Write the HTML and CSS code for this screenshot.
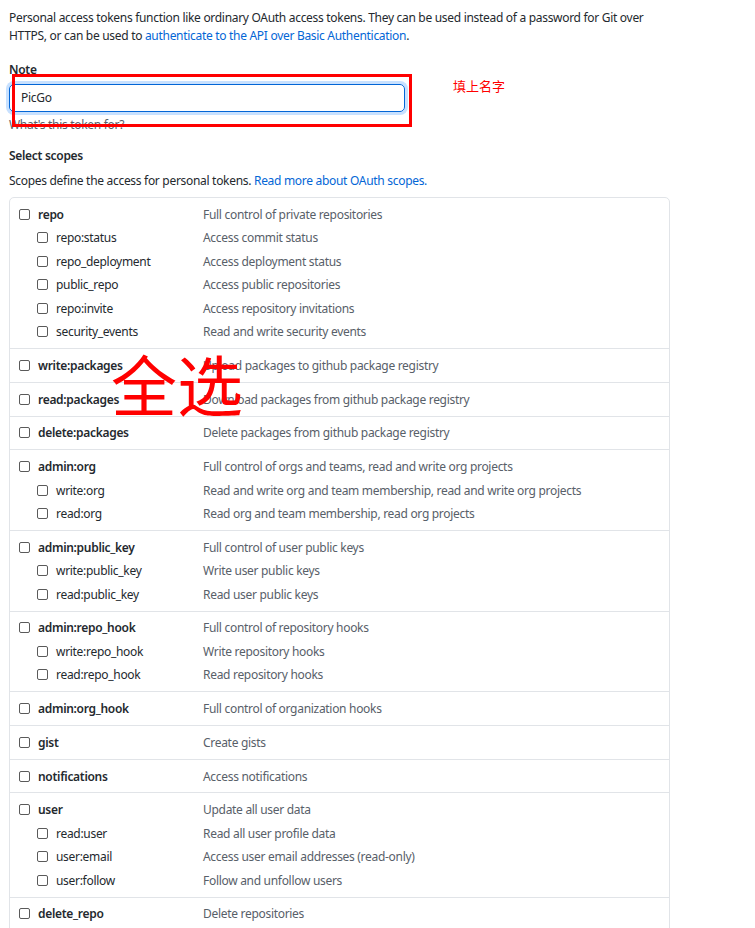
FILE: index.html
```html
<!DOCTYPE html>
<html lang="en">
<head>
<meta charset="utf-8">
<title>New personal access token</title>
<link rel="stylesheet" href="styles.css">
</head>
<body>
<div class="page">
  <p class="intro">Personal access tokens function like ordinary OAuth access tokens. They can be used instead of a password for Git over<br>HTTPS, or can be used to <a href="#">authenticate to the API over Basic Authentication</a>.</p>

  <div class="field">
    <label class="field-label">Note</label>
    <div class="input">PicGo</div>
    <p class="hint">What's this token for?</p>
    <div class="mark-rect"></div>
    <span class="mark-note">填上名字</span>
  </div>

  <h3 class="section-title">Select scopes</h3>
  <p class="section-desc">Scopes define the access for personal tokens. <a href="#">Read more about OAuth scopes.</a></p>

  <div class="scopes">
    <span class="mark-all">全选</span>

    <div class="group">
      <div class="row top"><span class="name"><i class="cb"></i>repo</span><span class="desc">Full control of private repositories</span></div>
      <div class="row sub"><span class="name"><i class="cb"></i>repo:status</span><span class="desc">Access commit status</span></div>
      <div class="row sub"><span class="name"><i class="cb"></i>repo_deployment</span><span class="desc">Access deployment status</span></div>
      <div class="row sub"><span class="name"><i class="cb"></i>public_repo</span><span class="desc">Access public repositories</span></div>
      <div class="row sub"><span class="name"><i class="cb"></i>repo:invite</span><span class="desc">Access repository invitations</span></div>
      <div class="row sub"><span class="name"><i class="cb"></i>security_events</span><span class="desc">Read and write security events</span></div>
    </div>

    <div class="group">
      <div class="row top"><span class="name"><i class="cb"></i>write:packages</span><span class="desc">Upload packages to github package registry</span></div>
    </div>

    <div class="group">
      <div class="row top"><span class="name"><i class="cb"></i>read:packages</span><span class="desc">Download packages from github package registry</span></div>
    </div>

    <div class="group">
      <div class="row top"><span class="name"><i class="cb"></i>delete:packages</span><span class="desc">Delete packages from github package registry</span></div>
    </div>

    <div class="group">
      <div class="row top"><span class="name"><i class="cb"></i>admin:org</span><span class="desc">Full control of orgs and teams, read and write org projects</span></div>
      <div class="row sub"><span class="name"><i class="cb"></i>write:org</span><span class="desc">Read and write org and team membership, read and write org projects</span></div>
      <div class="row sub"><span class="name"><i class="cb"></i>read:org</span><span class="desc">Read org and team membership, read org projects</span></div>
    </div>

    <div class="group">
      <div class="row top"><span class="name"><i class="cb"></i>admin:public_key</span><span class="desc">Full control of user public keys</span></div>
      <div class="row sub"><span class="name"><i class="cb"></i>write:public_key</span><span class="desc">Write user public keys</span></div>
      <div class="row sub"><span class="name"><i class="cb"></i>read:public_key</span><span class="desc">Read user public keys</span></div>
    </div>

    <div class="group">
      <div class="row top"><span class="name"><i class="cb"></i>admin:repo_hook</span><span class="desc">Full control of repository hooks</span></div>
      <div class="row sub"><span class="name"><i class="cb"></i>write:repo_hook</span><span class="desc">Write repository hooks</span></div>
      <div class="row sub"><span class="name"><i class="cb"></i>read:repo_hook</span><span class="desc">Read repository hooks</span></div>
    </div>

    <div class="group">
      <div class="row top"><span class="name"><i class="cb"></i>admin:org_hook</span><span class="desc">Full control of organization hooks</span></div>
    </div>

    <div class="group">
      <div class="row top"><span class="name"><i class="cb"></i>gist</span><span class="desc">Create gists</span></div>
    </div>

    <div class="group">
      <div class="row top"><span class="name"><i class="cb"></i>notifications</span><span class="desc">Access notifications</span></div>
    </div>

    <div class="group">
      <div class="row top"><span class="name"><i class="cb"></i>user</span><span class="desc">Update all user data</span></div>
      <div class="row sub"><span class="name"><i class="cb"></i>read:user</span><span class="desc">Read all user profile data</span></div>
      <div class="row sub"><span class="name"><i class="cb"></i>user:email</span><span class="desc">Access user email addresses (read-only)</span></div>
      <div class="row sub"><span class="name"><i class="cb"></i>user:follow</span><span class="desc">Follow and unfollow users</span></div>
    </div>

    <div class="group">
      <div class="row top"><span class="name"><i class="cb"></i>delete_repo</span><span class="desc">Delete repositories</span></div>
    </div>

    <div class="group group-more"></div>
  </div>
</div>
</body>
</html>
```
FILE: styles.css
```css
html, body {
  margin: 0;
  padding: 0;
  background: #ffffff;
}

body {
  font-family: "Noto Sans", "Open Sans", "Noto Sans CJK SC", sans-serif;
  font-size: 12px;
  letter-spacing: -0.3px;
  color: #24292e;
  overflow: hidden;
  height: 928px;
}

a {
  color: #0366d6;
  text-decoration: none;
}

.page {
  width: 661px;
  padding: 9px 0 0 9px;
}

.intro {
  margin: 0;
  line-height: 18px;
  white-space: nowrap;
}

.field {
  position: relative;
  margin-top: 16px;
}

.field-label {
  display: block;
  font-weight: 600;
  line-height: 18px;
}

.input {
  box-sizing: border-box;
  width: 396px;
  height: 28px;
  margin-top: 5px;
  padding: 0 11px;
  line-height: 26px;
  border: 1px solid #0366d6;
  border-radius: 5px;
  box-shadow: 0 0 0 3px #c8e1ff;
  color: #24292e;
}

.hint {
  margin: 4px 0 0;
  line-height: 18px;
  color: #586069;
}

.mark-rect {
  position: absolute;
  left: 3px;
  top: 13px;
  width: 394px;
  height: 47px;
  border: 3px solid #ff0000;
}

.mark-note {
  position: absolute;
  left: 444px;
  top: 16px;
  font-family: "Noto Sans CJK SC", sans-serif;
  font-size: 13px;
  line-height: 18px;
  letter-spacing: 0;
  color: #ff0000;
}

.section-title {
  margin: 13px 0 0;
  font-size: 12px;
  font-weight: 600;
  line-height: 18px;
}

.section-desc {
  margin: 7px 0 0;
  line-height: 18px;
}

.scopes {
  position: relative;
  margin-top: 7px;
  border: 1px solid #e1e4e8;
  border-radius: 5px;
}

.group {
  padding: 4.6px 0;
  border-top: 1px solid #e1e4e8;
}

.group:first-of-type {
  border-top: 0;
}

.group-more {
  height: 40px;
}

.row {
  display: grid;
  grid-template-columns: 193px 1fr;
  align-items: center;
  height: 23.5px;
  white-space: nowrap;
}

.name {
  display: flex;
  align-items: center;
  gap: 8px;
  padding-left: 9px;
}

.top .name {
  font-weight: 600;
}

.sub .name {
  padding-left: 27px;
}

.desc {
  color: #586069;
}

.cb {
  box-sizing: border-box;
  display: inline-block;
  width: 11px;
  height: 11px;
  border: 1px solid #5a5a5a;
  border-radius: 2px;
  background: #fff;
  flex: none;
}

.mark-all {
  position: absolute;
  left: 101px;
  top: 151px;
  font-family: "Noto Sans CJK SC", sans-serif;
  font-size: 66px;
  line-height: 66px;
  letter-spacing: 0;
  color: #ff0000;
  z-index: 2;
}
```
